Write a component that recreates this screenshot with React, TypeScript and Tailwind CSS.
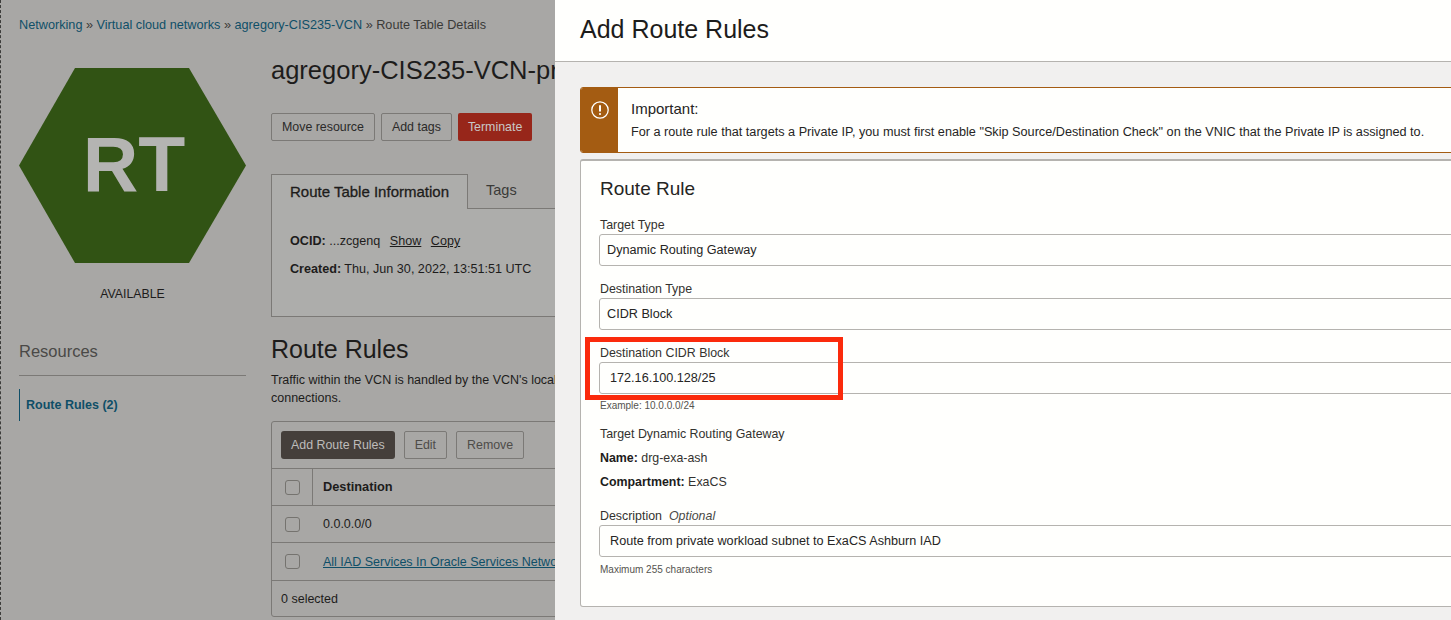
import React from 'react';

const linkClass = 'text-[#0f4f68]';

const Crumb = ({ label, last }: { label: string; last?: boolean }) => (
  <>
    <span className={last ? 'text-[#3a3a38]' : linkClass}>{label}</span>
    {!last && <span className="mx-[3.5px] text-[#3a3a38]">»</span>}
  </>
);

const Checkbox = () => (
  <span className="block h-[15px] w-[15px] rounded-[3px] border border-[#75736f]" />
);

const GhostButton = ({ label, muted }: { label: string; muted?: boolean }) => (
  <button
    className={`h-[28px] rounded-[2px] border border-[#7b7976] px-[10px] text-[12.4px] ${
      muted ? 'text-[#4e4c49]' : 'text-[#2b2a29]'
    }`}
  >
    {label}
  </button>
);

const Field = ({ label, optional, value, inset }: { label: string; optional?: boolean; value: string; inset?: boolean }) => (
  <div>
    <div className="h-[17px] pl-px text-[12.4px] leading-[17px] text-[#33322f]">
      {label}
      {optional && <i className="ml-[7px] text-[#4a4946]">Optional</i>}
    </div>
    <div
      className={`flex h-[32px] items-center rounded-[3px] border border-[#b5b3af] bg-[#fffffd] text-[12.65px] text-[#262524] ${
        inset ? 'pl-[10px]' : 'pl-[7px]'
      }`}
    >
      {value}
    </div>
  </div>
);

const LeftPanel = () => (
  <div className="h-[620px] w-[555px] shrink-0 overflow-hidden border-l border-dashed border-[#3c3c3a] bg-[#a8a7a5] pl-[18px] text-[#1d1c1b]">
    <div className="flex h-[52px] items-center whitespace-nowrap text-[12.7px]">
      <Crumb label="Networking" />
      <Crumb label="Virtual cloud networks" />
      <Crumb label="agregory-CIS235-VCN" />
      <Crumb label="Route Table Details" last />
    </div>

    <div className="flex gap-[25px]">
      <div className="w-[227px] shrink-0">
        <div className="relative mt-[16px] h-[195px] w-[227px]">
          <svg width="227" height="195" viewBox="0 0 227 195" className="block">
            <polygon points="0,97.5 56,0 170,0 227,97.5 170,195 56,195" fill="#315314" />
          </svg>
          <div className="absolute inset-0 flex items-center justify-center pb-[3px] pl-[3px] text-[77px] font-bold leading-none text-[#b4b4b2]">
            RT
          </div>
        </div>
        <div className="mt-[23px] text-center text-[12.3px] leading-[16px]">AVAILABLE</div>
        <div className="mt-[37px] text-[16.5px] font-light leading-[24px] text-[#4a4947]">Resources</div>
        <div className="mt-[12px] border-t border-[#7b7976]" />
        <div className="mt-[13px] flex h-[32px] items-center border-l border-[#0f4f68] pl-[6px] text-[12.5px] font-bold text-[#0f4f68]">
          Route Rules (2)
        </div>
      </div>

      <div className="w-[400px] shrink-0">
        <h1 className="-mt-[4px] h-[44px] whitespace-nowrap text-[25.5px] leading-[44px]">agregory-CIS235-VCN-private</h1>
        <div className="mt-[21px] flex gap-[6px]">
          <GhostButton label="Move resource" />
          <GhostButton label="Add tags" />
          <button className="h-[28px] rounded-[2px] bg-[#97261a] px-[10px] text-[12.4px] text-[#c9c8c6]">Terminate</button>
        </div>

        <div className="mt-[33px] flex h-[35px] items-end">
          <div className="flex h-[35px] w-[197px] items-center justify-center rounded-tl-[1px] border border-b-0 border-[#7b7976] bg-[#adadab] text-[15px] [-webkit-text-stroke:0.3px]">
            Route Table Information
          </div>
          <div className="flex h-[35px] flex-1 items-center border-b border-[#7b7976] pl-[18px] text-[14.5px] text-[#3a3a38]">Tags</div>
        </div>
        <div className="h-[108px] border-x border-b border-[#7b7976] bg-[#adadab] pl-[18px] pt-[23px] text-[12.6px] leading-[18px]">
          <div>
            <b>OCID:</b> ...zcgenq <span className="ml-[6px] underline">Show</span>{' '}
            <span className="ml-[6px] underline">Copy</span>
          </div>
          <div className="mt-[10px]">
            <b>Created:</b> Thu, Jun 30, 2022, 13:51:51 UTC
          </div>
        </div>

        <h2 className="mt-[16px] text-[25px] leading-[32px]">Route Rules</h2>
        <p className="mt-[6px] whitespace-nowrap text-[12.5px] leading-[18px]">
          Traffic within the VCN is handled by the VCN's local routing table. Rules apply to other
          <br />
          connections.
        </p>

        <div className="mt-[14px] h-[196px] rounded-[3px] border border-[#7b7976]">
          <div className="flex h-[47px] items-start gap-[9px] border-b border-[#7b7976] pl-[9px] pt-[9px]">
            <button className="h-[28px] rounded-[3px] bg-[#453f3b] px-[10px] text-[12.4px] text-[#bdbcba]">Add Route Rules</button>
            <GhostButton label="Edit" muted />
            <GhostButton label="Remove" muted />
          </div>
          <div className="flex h-[37px] items-center border-b border-[#7b7976]">
            <div className="flex h-full w-[41px] items-center border-r border-[#7b7976] pl-[13px]">
              <Checkbox />
            </div>
            <div className="pl-[10px] text-[12.8px] font-bold">Destination</div>
          </div>
          <div className="flex h-[37px] items-center border-b border-[#7b7976] pl-[13px]">
            <Checkbox />
            <span className="ml-[23px] text-[12.5px]">0.0.0.0/0</span>
          </div>
          <div className="flex h-[38px] items-center border-b border-[#7b7976] pl-[13px]">
            <Checkbox />
            <span className={`ml-[23px] whitespace-nowrap pt-[2px] text-[12.5px] underline ${linkClass}`}>
              All IAD Services In Oracle Services Network
            </span>
          </div>
          <div className="flex h-[35px] items-center pl-[9px] pt-[2px] text-[12.5px]">0 selected</div>
        </div>
      </div>
    </div>
  </div>
);

const RightPanel = () => (
  <div className="relative h-[620px] flex-1 overflow-hidden bg-[#f1f0ef]">
    <div className="flex h-[62px] items-center border-b border-[#b5b3af] bg-[#fffffd] pb-[2px] pl-[25px] text-[25px] text-[#1d1c1b]">
      Add Route Rules
    </div>

    <div className="ml-[25px] mt-[25px] w-[1000px]">
      <div className="flex h-[66px] overflow-hidden rounded-[3px] border border-[#a45c12] bg-[#fffffd]">
        <div className="flex w-[37px] shrink-0 justify-center bg-[#a45c12] pt-[13px]">
          <svg width="18" height="18" viewBox="0 0 18 18" fill="none" stroke="#ffffff">
            <circle cx="9" cy="9" r="8.2" strokeWidth="1.3" />
            <path d="M9 4.2v6.2" strokeWidth="2" />
            <circle cx="9" cy="13" r="1.1" fill="#ffffff" stroke="none" />
          </svg>
        </div>
        <div className="pl-[13px] pt-[12px] text-[#262524]">
          <div className="text-[15px] leading-[18px]">Important:</div>
          <div className="mt-[5px] text-[12.68px] leading-[18px]">
            For a route rule that targets a Private IP, you must first enable "Skip Source/Destination Check" on the VNIC that the Private IP is assigned to.
          </div>
        </div>
      </div>

      <div className="mt-[6px] h-[448px] rounded-[3px] border border-t-2 border-[#b5b3af] bg-[#fffffd] pl-[18px] pt-[16px]">
        <div className="pl-px text-[19px] leading-[24px] text-[#262524]">Route Rule</div>
        <div className="mt-[16px] flex flex-col gap-[15px]">
          <Field label="Target Type" value="Dynamic Routing Gateway" />
          <Field label="Destination Type" value="CIDR Block" />
          <Field label="Destination CIDR Block" value="172.16.100.128/25" inset />
        </div>
        <div className="mt-[5px] pl-px text-[10px] leading-[14px] text-[#55534f]">Example: 10.0.0.0/24</div>
        <div className="mt-[12px] pl-px text-[12.4px] leading-[18px] text-[#33322f]">Target Dynamic Routing Gateway</div>
        <div className="mt-[6px] pl-px text-[12.4px] leading-[18px] text-[#33322f]">
          <b className="text-[#1d1c1b]">Name:</b> drg-exa-ash
        </div>
        <div className="mt-[6px] pl-px text-[12.4px] leading-[18px] text-[#33322f]">
          <b className="text-[#1d1c1b]">Compartment:</b> ExaCS
        </div>
        <div className="mt-[17px]">
          <Field label="Description" optional value="Route from private workload subnet to ExaCS Ashburn IAD" inset />
        </div>
        <div className="mt-[6px] pl-px text-[10px] leading-[14px] text-[#55534f]">Maximum 255 characters</div>
      </div>
    </div>

    {/* highlight drawn over the screenshot */}
    <div className="absolute left-[30px] top-[337px] h-[63px] w-[258px] border-[5px] border-[#fb2a0c]" />
  </div>
);

export default function App() {
  return (
    <div className="flex h-[620px] w-[1451px] overflow-hidden font-['Liberation_Sans',Arial,sans-serif]">
      <LeftPanel />
      <RightPanel />
    </div>
  );
}
